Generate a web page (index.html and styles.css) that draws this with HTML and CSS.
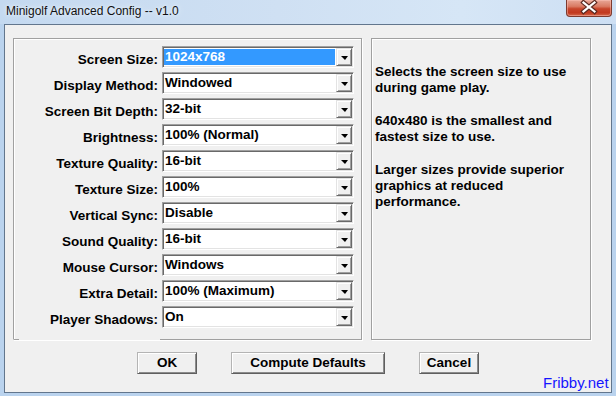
FILE: index.html
```html
<!DOCTYPE html>
<html lang="en">
<head>
  <meta charset="UTF-8">
  <title>Minigolf Advanced Config -- v1.0</title>
  <link rel="stylesheet" href="styles.css">
</head>
<body>
  <div class="window">
    <div class="titlebar">
      <span class="title">Minigolf Advanced Config -- v1.0</span>
      <div class="close">
        <svg width="46" height="17" viewBox="0 0 46 17">
          <path d="M17.5 3.5 L28.5 12.5 M28.5 3.5 L17.5 12.5" stroke="#5b2a22" stroke-width="4.5" stroke-linecap="square" fill="none"/>
          <path d="M17.5 3.5 L28.5 12.5 M28.5 3.5 L17.5 12.5" stroke="#fff" stroke-width="2.2" stroke-linecap="square" fill="none"/>
        </svg>
      </div>
    </div>

    <div class="client">
      <div class="panels">
        <div class="group settings">
          <label>Screen Size:</label>
          <div class="combo"><span class="value selected">1024x768</span><span class="drop"></span></div>
          <label>Display Method:</label>
          <div class="combo"><span class="value">Windowed</span><span class="drop"></span></div>
          <label>Screen Bit Depth:</label>
          <div class="combo"><span class="value">32-bit</span><span class="drop"></span></div>
          <label>Brightness:</label>
          <div class="combo"><span class="value">100% (Normal)</span><span class="drop"></span></div>
          <label>Texture Quality:</label>
          <div class="combo"><span class="value">16-bit</span><span class="drop"></span></div>
          <label>Texture Size:</label>
          <div class="combo"><span class="value">100%</span><span class="drop"></span></div>
          <label>Vertical Sync:</label>
          <div class="combo"><span class="value">Disable</span><span class="drop"></span></div>
          <label>Sound Quality:</label>
          <div class="combo"><span class="value">16-bit</span><span class="drop"></span></div>
          <label>Mouse Cursor:</label>
          <div class="combo"><span class="value">Windows</span><span class="drop"></span></div>
          <label>Extra Detail:</label>
          <div class="combo"><span class="value">100% (Maximum)</span><span class="drop"></span></div>
          <label>Player Shadows:</label>
          <div class="combo"><span class="value">On</span><span class="drop"></span></div>
        </div>

        <div class="group help">
          <p>Selects the screen size to use during game play.</p>
          <p>640x480 is the smallest and fastest size to use.</p>
          <p>Larger sizes provide superior graphics at reduced performance.</p>
        </div>
      </div>

      <div class="buttons">
        <div class="btn ok">OK</div>
        <div class="btn wide">Compute Defaults</div>
        <div class="btn">Cancel</div>
      </div>

      <div class="footer">Fribby.net</div>
    </div>
  </div>
</body>
</html>
```

FILE: styles.css
```css
* {
  box-sizing: border-box;
}
body {
  margin: 0;
  background: #bcd4ee;
  font-family: "Liberation Sans", Arial, sans-serif;
}
.window {
  width: 616px;
  height: 396px;
  background: #bad3ee;
  overflow: hidden;
}
.titlebar {
  height: 24px;
  display: flex;
  justify-content: space-between;
  align-items: flex-start;
  background: linear-gradient(to right, #c4d9f0, #cfe0f3 45%, #d6e6f6 75%, #cddff3);
}
.title {
  padding: 4px 0 0 6px;
  font-size: 12px;
  line-height: 14px;
  color: #111;
  text-shadow: 0 0 6px #e8f1fb, 0 0 3px #e8f1fb;
}
.close {
  width: 46px;
  height: 17px;
  margin-right: 4px;
  border: 1px solid #7d3a2e;
  border-top: none;
  border-radius: 0 0 4px 4px;
  background: linear-gradient(to bottom, #e8a797, #d97a63 40%, #c7452b 55%, #c2391f 80%, #d46a4c);
  box-shadow: inset 0 0 0 1px rgba(255, 200, 190, 0.45);
}
.close svg {
  display: block;
  margin: -1px 0 0 -1px;
}

.client {
  height: 369px;
  margin: 0 4px;
  border: 1px solid #62768d;
  background: #f0f0f0;
  padding: 13px 0 0 8px;
  overflow: hidden;
}
.panels {
  display: flex;
  gap: 9px;
}
.group {
  height: 302px;
  border: 1px solid #a0a0a0;
  box-shadow: inset 1px 1px #fff, 1px 1px #fff;
}
.settings {
  width: 349px;
  display: grid;
  grid-template-columns: 144px 192px;
  grid-auto-rows: 22px;
  column-gap: 4px;
  row-gap: 4px;
  align-content: start;
  padding: 7px 0 0 0;
  border-bottom-color: transparent;
  background:
    linear-gradient(#a0a0a0, #a0a0a0) 0 100% / 6px 1px no-repeat,
    linear-gradient(#a0a0a0, #a0a0a0) 100% 100% / 202px 1px no-repeat;
  background-origin: border-box;
}
.settings label {
  height: 22px;
  line-height: 27px;
  text-align: right;
  white-space: nowrap;
  font-weight: bold;
  font-size: 13.5px;
  color: #000;
}
.combo {
  display: flex;
  height: 22px;
  padding: 1px;
  border: 1px solid;
  border-color: #a0a0a0 #fff #fff #a0a0a0;
  box-shadow: inset 1px 1px #696969, inset -1px -1px #e3e3e3;
  background: #fff;
}
.value {
  flex: 1;
  padding: 0 1px;
  line-height: 18px;
  font-weight: bold;
  font-size: 13.5px;
  color: #000;
  white-space: nowrap;
}
.value.selected {
  margin: 1px 1px 1px 0;
  line-height: 16px;
  background: #3399ff;
  color: #fff;
}
.drop {
  width: 16px;
  height: 18px;
  display: flex;
  align-items: center;
  justify-content: center;
  border: 1px solid;
  border-color: #e3e3e3 #696969 #696969 #e3e3e3;
  box-shadow: inset 1px 1px #fff, inset -1px -1px #a0a0a0;
  background: #f0f0f0;
}
.drop::after {
  content: "";
  border-top: 4px solid #000;
  border-left: 4px solid transparent;
  border-right: 3px solid transparent;
  margin-top: 1px;
}

.help {
  width: 220px;
  padding: 25px 0 0 3px;
}
.help p {
  margin: 0 0 17px;
  font-weight: bold;
  font-size: 13.5px;
  line-height: 16px;
  color: #000;
}

.buttons {
  display: flex;
  justify-content: center;
  gap: 34px;
  margin: 12px 0 0 -8px;
}
.btn {
  width: 60px;
  height: 22px;
  border: 1px solid;
  border-color: #b4b4b4 #5f5f5f #5f5f5f #b4b4b4;
  box-shadow: inset 1px 1px #fff, inset -1px -1px #8c8c8c;
  background: #f0f0f0;
  text-align: center;
  line-height: 19px;
  font-weight: bold;
  font-size: 13.5px;
  color: #000;
}
.btn.wide {
  width: 154px;
}
.footer {
  padding-left: 530px;
  font-size: 15px;
  line-height: 18px;
  color: #1515ff;
  white-space: nowrap;
}
```
